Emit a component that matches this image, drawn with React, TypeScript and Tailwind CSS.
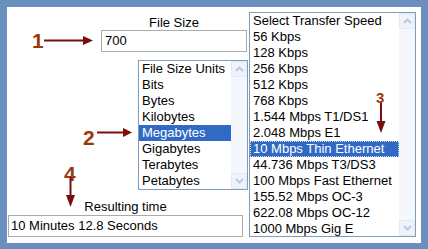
import React from "react";

const UNITS = ["File Size Units", "Bits", "Bytes", "Kilobytes", "Megabytes", "Gigabytes", "Terabytes", "Petabytes"];
const SPEEDS = [
  "Select Transfer Speed",
  "56 Kbps",
  "128 Kbps",
  "256 Kbps",
  "512 Kbps",
  "768 Kbps",
  "1.544 Mbps T1/DS1",
  "2.048 Mbps E1",
  "10 Mbps Thin Ethernet",
  "44.736 Mbps T3/DS3",
  "100 Mbps Fast Ethernet",
  "155.52 Mbps OC-3",
  "622.08 Mbps OC-12",
  "1000 Mbps Gig E",
];

const font = { fontFamily: '"Liberation Sans", Arial, sans-serif' };

function Chevron({ up }: { up?: boolean }) {
  return (
    <svg width="9" height="6" viewBox="0 0 9 6">
      <path
        d={up ? "M1 5 L4.5 1.5 L8 5" : "M1 1 L4.5 4.5 L8 1"}
        fill="none"
        stroke="#b9c8e4"
        strokeWidth="2"
      />
    </svg>
  );
}

function Scrollbar() {
  return (
    <div className="flex w-[16px] flex-col justify-between bg-[#f4f7fc]">
      <div className="flex h-[16px] items-center justify-center rounded-[2px] border border-[#e3eaf6] bg-[#eef2fa]">
        <Chevron up />
      </div>
      <div className="flex h-[16px] items-center justify-center rounded-[2px] border border-[#e3eaf6] bg-[#eef2fa]">
        <Chevron />
      </div>
    </div>
  );
}

function ListBox({ items, selected, focus, className }: { items: string[]; selected: string; focus?: boolean; className: string }) {
  return (
    <div className={`flex border border-[#7f9db9] bg-white ${className}`}>
      <ul className="flex-1 text-[13px] leading-[16px] text-black">
        {items.map((it) => (
          <li
            key={it}
            className={
              it === selected
                ? `h-[16px] whitespace-nowrap bg-[#316ac5] pl-[3px] text-white ${focus ? "outline-1 outline-dotted outline-offset-[-1px] outline-[#c9d7ee]" : ""}`
                : "h-[16px] whitespace-nowrap pl-[3px]"
            }
          >
            {it}
          </li>
        ))}
      </ul>
      <Scrollbar />
    </div>
  );
}

function Num({ n, className }: { n: string; className: string }) {
  return <span className={`absolute font-bold leading-none text-[#9a3a0c] ${className}`}>{n}</span>;
}

export default function App() {
  return (
    <div className="h-[249px] w-[428px] bg-[#6a8fbf] pb-[6px] pl-[7px] pr-[7px] pt-[7px]" style={font}>
      <div className="relative flex h-full bg-white">
        {/* left column */}
        <div className="flex w-[242px] flex-col">
          <div className="ml-[94px] mt-[8px] w-[146px] text-center text-[13px] leading-[15px]">File Size</div>
          <div className="ml-[94px] flex h-[22px] w-[146px] items-center border border-[#a5acb2] pl-[3px] text-[13px]">700</div>
          <ListBox items={UNITS} selected="Megabytes" className="ml-[131px] mt-[8px] h-[130px] w-[110px]" />
          <div className="ml-[1px] mt-[9px] w-[235px] text-center text-[13px] leading-[15px]">Resulting time</div>
          <div className="ml-[1px] mt-[1px] flex h-[22px] w-[235px] items-center border border-[#a5acb2] pl-[2px] text-[13px]">
            10 Minutes 12.8 Seconds
          </div>
        </div>

        <ListBox items={SPEEDS} selected="10 Mbps Thin Ethernet" focus className="mt-[5px] h-[225px] w-[167px]" />

        {/* annotations */}
        <Num n="1" className="left-[25px] top-[23px] text-[21px]" />
        <Num n="2" className="left-[76px] top-[120px] text-[21px]" />
        <Num n="3" className="left-[369px] top-[83px] text-[15px]" />
        <Num n="4" className="left-[57px] top-[156px] text-[21px]" />
        <svg className="pointer-events-none absolute left-0 top-0" width="414" height="236">
          <g fill="#7a0d0d" stroke="#7a0d0d">
            <line x1="37" y1="33.5" x2="78" y2="33.5" strokeWidth="2" />
            <path d="M76 29 L86 33.5 L76 38 Z" stroke="none" />
            <line x1="90" y1="125.5" x2="118" y2="125.5" strokeWidth="2" />
            <path d="M116 121 L125 125.5 L116 130 Z" stroke="none" />
            <line x1="374" y1="96" x2="374" y2="116" strokeWidth="2" />
            <path d="M369.5 114 L374 126 L378.5 114 Z" stroke="none" />
            <line x1="63.5" y1="170" x2="63.5" y2="190" strokeWidth="2" />
            <path d="M59 188 L63.5 200 L68 188 Z" stroke="none" />
          </g>
        </svg>
      </div>
    </div>
  );
}
